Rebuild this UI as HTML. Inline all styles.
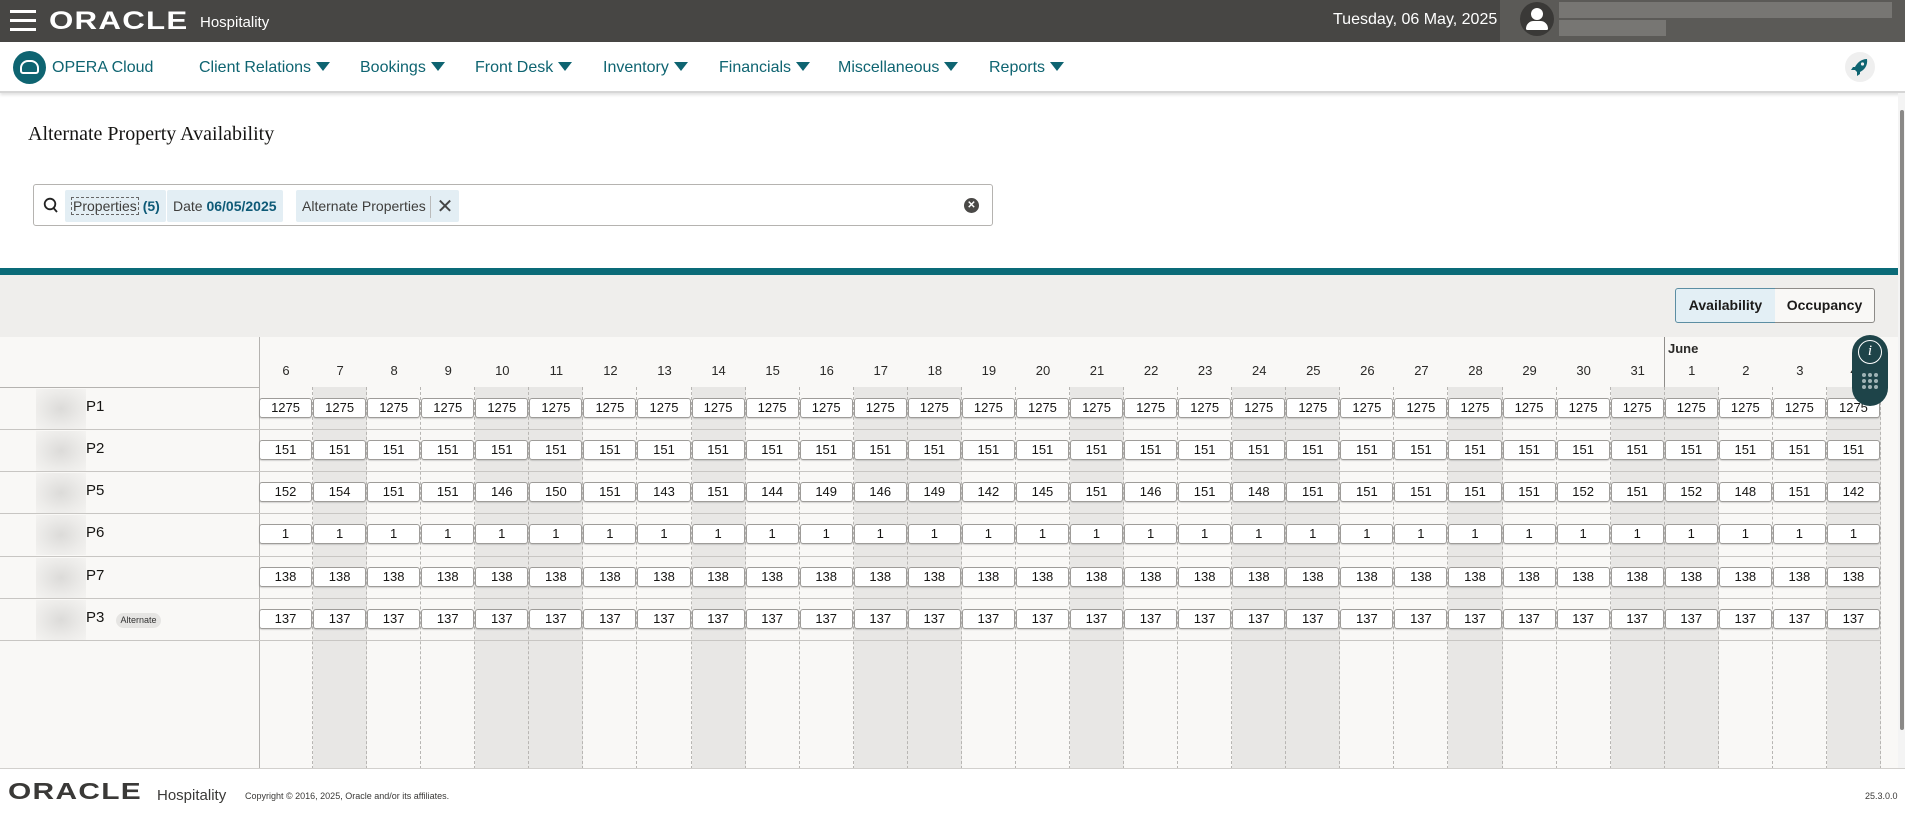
<!DOCTYPE html>
<html><head><meta charset="utf-8">
<style>
*{box-sizing:border-box;margin:0;padding:0}
body{width:1905px;height:813px;overflow:hidden;background:#fff;font-family:"Liberation Sans",sans-serif;position:relative;color:#161513}
.abs{position:absolute}
#top{left:0;top:0;width:1905px;height:42px;background:#474644}
#user{left:1500px;top:0;width:405px;height:42px;background:#5b5a57}
.hb{left:10px;width:26px;height:3px;background:#fff}
#nav{left:0;top:42px;width:1905px;height:51px;background:#fff;border-bottom:2px solid #d6d6d6;box-shadow:0 2px 3px rgba(0,0,0,.12)}
.ni{position:absolute;top:17px;font-size:16px;color:#0e6471;white-space:nowrap}
.ni i{display:inline-block;width:0;height:0;border-left:7px solid transparent;border-right:7px solid transparent;border-top:9px solid #0e6471;margin-left:5px;vertical-align:1px}
.chip{position:absolute;top:5px;height:32px;background:#e3eef4;border-radius:2px;font-size:14px;line-height:32px;padding:0 6px;color:#3f3e3c;white-space:nowrap}
.chip b{color:#0e5a77}
#grid{left:0;top:337px;width:1898px;height:432px;background:#f9f8f6}
.col{position:absolute;top:50px;height:382px;width:54.07px;border-right:1px dashed #b8b6b3}
.sh{background:#e8e7e5}
.hd{position:absolute;top:26px;width:54.07px;text-align:center;font-size:13px;color:#2b2a28}
.row{position:absolute;left:259px;width:1622px;display:grid;grid-template-columns:repeat(30,1fr);height:20px}
.row b{font-weight:normal;font-size:13px;background:#fff;border:1px solid #9e9c99;border-radius:3px;text-align:center;line-height:18px;margin-right:1px;color:#161513;box-shadow:0 1px 1px rgba(0,0,0,.15)}
.ln{position:absolute;height:1px;background:#c8c6c3}
.lbl{position:absolute;left:86px;font-size:15px;color:#161513}
.blur{position:absolute;left:36px;width:50px;height:40px;background:radial-gradient(ellipse at center,#dcdbd9 0%,#ecebe9 60%,#f4f3f1 100%)}
</style></head><body>
<div id="top" class="abs"></div>
<div id="user" class="abs"></div>
<div class="abs hb" style="top:10px"></div>
<div class="abs hb" style="top:19px"></div>
<div class="abs hb" style="top:28px"></div>
<div class="abs" style="left:49px;top:7px;color:#fff;font-size:25px;font-weight:bold;letter-spacing:1px;transform:scaleX(1.25);transform-origin:left">ORACLE</div>
<div class="abs" style="left:200px;top:14px;color:#fff;font-size:15px">Hospitality</div>
<div class="abs" style="left:1333px;top:11px;color:#fff;font-size:16px">Tuesday, 06 May, 2025</div>
<div class="abs" style="left:1520px;top:2px;width:34px;height:34px;border-radius:50%;background:#3a3937"></div>
<div class="abs" style="left:1531px;top:8px;width:12px;height:12px;border-radius:50%;background:#fff"></div>
<div class="abs" style="left:1526px;top:21px;width:22px;height:9px;border-radius:11px 11px 2px 2px;background:#fff"></div>
<div class="abs" style="left:1559px;top:2px;width:333px;height:16px;background:#777673"></div>
<div class="abs" style="left:1559px;top:20px;width:107px;height:16px;background:#777673"></div>

<div id="nav" class="abs">
 <div class="abs" style="left:13px;top:9px;width:33px;height:33px;border-radius:50%;background:#0e6471"></div>
 <div class="abs" style="left:20px;top:18px;width:19px;height:14px;border:2px solid #fff;border-radius:8px 8px 3px 3px"></div>
 <div class="ni" style="left:52px">OPERA Cloud</div>
 <div class="ni" style="left:199px">Client Relations<i></i></div>
 <div class="ni" style="left:360px">Bookings<i></i></div>
 <div class="ni" style="left:475px">Front Desk<i></i></div>
 <div class="ni" style="left:603px">Inventory<i></i></div>
 <div class="ni" style="left:719px">Financials<i></i></div>
 <div class="ni" style="left:838px">Miscellaneous<i></i></div>
 <div class="ni" style="left:989px">Reports<i></i></div>
 <div class="abs" style="left:1845px;top:10px;width:30px;height:30px;border-radius:50%;background:#efefef"></div>
 <svg class="abs" style="left:1850px;top:15px" width="20" height="20" viewBox="0 0 20 20"><path d="M17 2 C11 2 7 6 5 10 L3 10 L1 13 L5 13 L7 15 L7 19 L10 17 L10 15 C14 13 18 9 17 2Z" fill="#0e6471"/><circle cx="12.5" cy="7" r="1.6" fill="#efefef"/></svg>
</div>

<div class="abs" style="left:28px;top:123px;font-family:'Liberation Serif',serif;font-size:20px;color:#161513">Alternate Property Availability</div>

<div class="abs" style="left:33px;top:184px;width:960px;height:42px;border:1px solid #b5b3b0;border-radius:3px;background:#fff">
 <svg class="abs" style="left:9px;top:12px" width="16" height="17" viewBox="0 0 16 17"><circle cx="7" cy="7" r="5.3" fill="none" stroke="#222" stroke-width="1.8"/><path d="M10.5 11 L14 15" stroke="#222" stroke-width="1.8"/></svg>
 <div class="chip" style="left:31px"><span style="border:1px dashed #666;padding:0 1px">Properties</span><b> (5)</b></div>
 <div class="chip" style="left:133px">Date <b>06/05/2025</b></div>
 <div class="chip" style="left:262px">Alternate Properties <span style="border-left:1px solid #bbb;padding-left:6px;font-size:20px;vertical-align:-2px;color:#444">✕</span></div>
 <div class="abs" style="left:930px;top:13px;width:15px;height:15px;border-radius:50%;background:#4a4947;color:#fff;font-size:10px;line-height:15px;text-align:center;font-weight:bold">✕</div>
</div>

<div class="abs" style="left:0;top:268px;width:1898px;height:7px;background:#0a6b78"></div>
<div class="abs" style="left:0;top:275px;width:1898px;height:62px;background:#efeeec"></div>
<div class="abs" style="left:1675px;top:288px;width:101px;height:35px;border:1px solid #5c8ea3;background:#e3eff5;border-radius:3px 0 0 3px;font-size:14px;line-height:33px;text-align:center;font-weight:bold;color:#1c1b1a">Availability</div>
<div class="abs" style="left:1775px;top:288px;width:100px;height:35px;border:1px solid #8d8b88;border-left:none;background:#f9f8f6;border-radius:0 3px 3px 0;font-size:14px;line-height:33px;text-align:center;font-weight:bold;color:#1c1b1a">Occupancy</div>

<div id="grid" class="abs">
 <div class="abs" style="left:259px;top:0;width:1px;height:432px;background:#b5b3b0"></div>
 <div class="abs" style="left:1664px;top:0;width:1px;height:432px;background:#8f8d8a"></div>
 <div class="abs" style="left:1668px;top:4px;font-size:13px;font-weight:bold;color:#2b2a28">June</div>
</div>
<div class="abs" style="left:259px;top:337px;width:1622px;height:432px">
<div class="col" style="left:0"></div><div class="col sh" style="left:54.07px"></div><div class="col" style="left:108.13px"></div><div class="col" style="left:162.2px"></div><div class="col sh" style="left:216.27px"></div><div class="col sh" style="left:270.33px"></div><div class="col" style="left:324.4px"></div><div class="col" style="left:378.47px"></div><div class="col sh" style="left:432.53px"></div><div class="col" style="left:486.6px"></div><div class="col" style="left:540.67px"></div><div class="col sh" style="left:594.73px"></div><div class="col sh" style="left:648.8px"></div><div class="col" style="left:702.87px"></div><div class="col" style="left:756.93px"></div><div class="col sh" style="left:811px"></div><div class="col" style="left:865.07px"></div><div class="col" style="left:919.13px"></div><div class="col sh" style="left:973.2px"></div><div class="col sh" style="left:1027.27px"></div><div class="col" style="left:1081.33px"></div><div class="col" style="left:1135.4px"></div><div class="col sh" style="left:1189.47px"></div><div class="col" style="left:1243.53px"></div><div class="col" style="left:1297.6px"></div><div class="col sh" style="left:1351.67px"></div><div class="col sh" style="left:1405.73px"></div><div class="col" style="left:1459.8px"></div><div class="col" style="left:1513.87px"></div><div class="col sh" style="left:1567.93px"></div>
<div class="hd" style="left:0">6</div><div class="hd" style="left:54.07px">7</div><div class="hd" style="left:108.13px">8</div><div class="hd" style="left:162.2px">9</div><div class="hd" style="left:216.27px">10</div><div class="hd" style="left:270.33px">11</div><div class="hd" style="left:324.4px">12</div><div class="hd" style="left:378.47px">13</div><div class="hd" style="left:432.53px">14</div><div class="hd" style="left:486.6px">15</div><div class="hd" style="left:540.67px">16</div><div class="hd" style="left:594.73px">17</div><div class="hd" style="left:648.8px">18</div><div class="hd" style="left:702.87px">19</div><div class="hd" style="left:756.93px">20</div><div class="hd" style="left:811px">21</div><div class="hd" style="left:865.07px">22</div><div class="hd" style="left:919.13px">23</div><div class="hd" style="left:973.2px">24</div><div class="hd" style="left:1027.27px">25</div><div class="hd" style="left:1081.33px">26</div><div class="hd" style="left:1135.4px">27</div><div class="hd" style="left:1189.47px">28</div><div class="hd" style="left:1243.53px">29</div><div class="hd" style="left:1297.6px">30</div><div class="hd" style="left:1351.67px">31</div><div class="hd" style="left:1405.73px">1</div><div class="hd" style="left:1459.8px">2</div><div class="hd" style="left:1513.87px">3</div><div class="hd" style="left:1567.93px">4</div>
</div>

<div class="ln" style="left:0;top:387px;width:259px;background:#b5b3b0"></div>
<div class="ln" style="left:0;top:429px;width:1881px"></div>
<div class="ln" style="left:0;top:471px;width:1881px"></div>
<div class="ln" style="left:0;top:513px;width:1881px"></div>
<div class="ln" style="left:0;top:556px;width:1881px"></div>
<div class="ln" style="left:0;top:598px;width:1881px"></div>
<div class="ln" style="left:0;top:640px;width:1881px"></div>

<div class="blur" style="top:389px"></div><div class="lbl" style="top:398px">P1</div>
<div class="blur" style="top:431px"></div><div class="lbl" style="top:440px">P2</div>
<div class="blur" style="top:473px"></div><div class="lbl" style="top:482px">P5</div>
<div class="blur" style="top:515px"></div><div class="lbl" style="top:524px">P6</div>
<div class="blur" style="top:558px"></div><div class="lbl" style="top:567px">P7</div>
<div class="blur" style="top:600px"></div><div class="lbl" style="top:609px">P3</div>
<div class="abs" style="left:116px;top:613px;width:45px;height:15px;border-radius:8px;background:#e6e5e3;font-size:9px;line-height:15px;text-align:center;color:#333">Alternate</div>

<div class="row" style="top:398px"><b>1275</b><b>1275</b><b>1275</b><b>1275</b><b>1275</b><b>1275</b><b>1275</b><b>1275</b><b>1275</b><b>1275</b><b>1275</b><b>1275</b><b>1275</b><b>1275</b><b>1275</b><b>1275</b><b>1275</b><b>1275</b><b>1275</b><b>1275</b><b>1275</b><b>1275</b><b>1275</b><b>1275</b><b>1275</b><b>1275</b><b>1275</b><b>1275</b><b>1275</b><b>1275</b></div>
<div class="row" style="top:440px"><b>151</b><b>151</b><b>151</b><b>151</b><b>151</b><b>151</b><b>151</b><b>151</b><b>151</b><b>151</b><b>151</b><b>151</b><b>151</b><b>151</b><b>151</b><b>151</b><b>151</b><b>151</b><b>151</b><b>151</b><b>151</b><b>151</b><b>151</b><b>151</b><b>151</b><b>151</b><b>151</b><b>151</b><b>151</b><b>151</b></div>
<div class="row" style="top:482px"><b>152</b><b>154</b><b>151</b><b>151</b><b>146</b><b>150</b><b>151</b><b>143</b><b>151</b><b>144</b><b>149</b><b>146</b><b>149</b><b>142</b><b>145</b><b>151</b><b>146</b><b>151</b><b>148</b><b>151</b><b>151</b><b>151</b><b>151</b><b>151</b><b>152</b><b>151</b><b>152</b><b>148</b><b>151</b><b>142</b></div>
<div class="row" style="top:524px"><b>1</b><b>1</b><b>1</b><b>1</b><b>1</b><b>1</b><b>1</b><b>1</b><b>1</b><b>1</b><b>1</b><b>1</b><b>1</b><b>1</b><b>1</b><b>1</b><b>1</b><b>1</b><b>1</b><b>1</b><b>1</b><b>1</b><b>1</b><b>1</b><b>1</b><b>1</b><b>1</b><b>1</b><b>1</b><b>1</b></div>
<div class="row" style="top:567px"><b>138</b><b>138</b><b>138</b><b>138</b><b>138</b><b>138</b><b>138</b><b>138</b><b>138</b><b>138</b><b>138</b><b>138</b><b>138</b><b>138</b><b>138</b><b>138</b><b>138</b><b>138</b><b>138</b><b>138</b><b>138</b><b>138</b><b>138</b><b>138</b><b>138</b><b>138</b><b>138</b><b>138</b><b>138</b><b>138</b></div>
<div class="row" style="top:609px"><b>137</b><b>137</b><b>137</b><b>137</b><b>137</b><b>137</b><b>137</b><b>137</b><b>137</b><b>137</b><b>137</b><b>137</b><b>137</b><b>137</b><b>137</b><b>137</b><b>137</b><b>137</b><b>137</b><b>137</b><b>137</b><b>137</b><b>137</b><b>137</b><b>137</b><b>137</b><b>137</b><b>137</b><b>137</b><b>137</b></div>

<div class="abs" style="left:1852px;top:335px;width:36px;height:71px;border-radius:18px;background:#1e4449"></div>
<div class="abs" style="left:1858px;top:340px;width:24px;height:24px;border-radius:50%;border:1.5px solid #fff;color:#fff;font-family:'Liberation Serif',serif;font-style:italic;font-size:15px;line-height:21px;text-align:center">i</div>
<svg class="abs" style="left:1861px;top:372px" width="18" height="18" viewBox="0 0 18 18" fill="#9fb3b5"><circle cx="3" cy="3" r="2"/><circle cx="9" cy="3" r="2"/><circle cx="15" cy="3" r="2"/><circle cx="3" cy="9" r="2"/><circle cx="9" cy="9" r="2"/><circle cx="15" cy="9" r="2"/><circle cx="3" cy="15" r="2"/><circle cx="9" cy="15" r="2"/><circle cx="15" cy="15" r="2"/></svg>

<div class="abs" style="left:1898px;top:93px;width:7px;height:676px;background:#f4f4f4"></div>
<div class="abs" style="left:1900px;top:110px;width:4px;height:620px;background:#8a8987;border-radius:2px"></div>

<div class="abs" style="left:0;top:768px;width:1905px;height:45px;background:#fff;border-top:1px solid #d2d0cd"></div>
<div class="abs" style="left:8px;top:778px;color:#3a3937;font-size:23px;font-weight:bold;letter-spacing:1px;transform:scaleX(1.3);transform-origin:left">ORACLE</div>
<div class="abs" style="left:157px;top:787px;color:#3a3937;font-size:15px">Hospitality</div>
<div class="abs" style="left:245px;top:791px;color:#3a3937;font-size:9px">Copyright © 2016, 2025, Oracle and/or its affiliates.</div>
<div class="abs" style="left:1865px;top:791px;color:#3a3937;font-size:9px">25.3.0.0</div>
</body></html>
